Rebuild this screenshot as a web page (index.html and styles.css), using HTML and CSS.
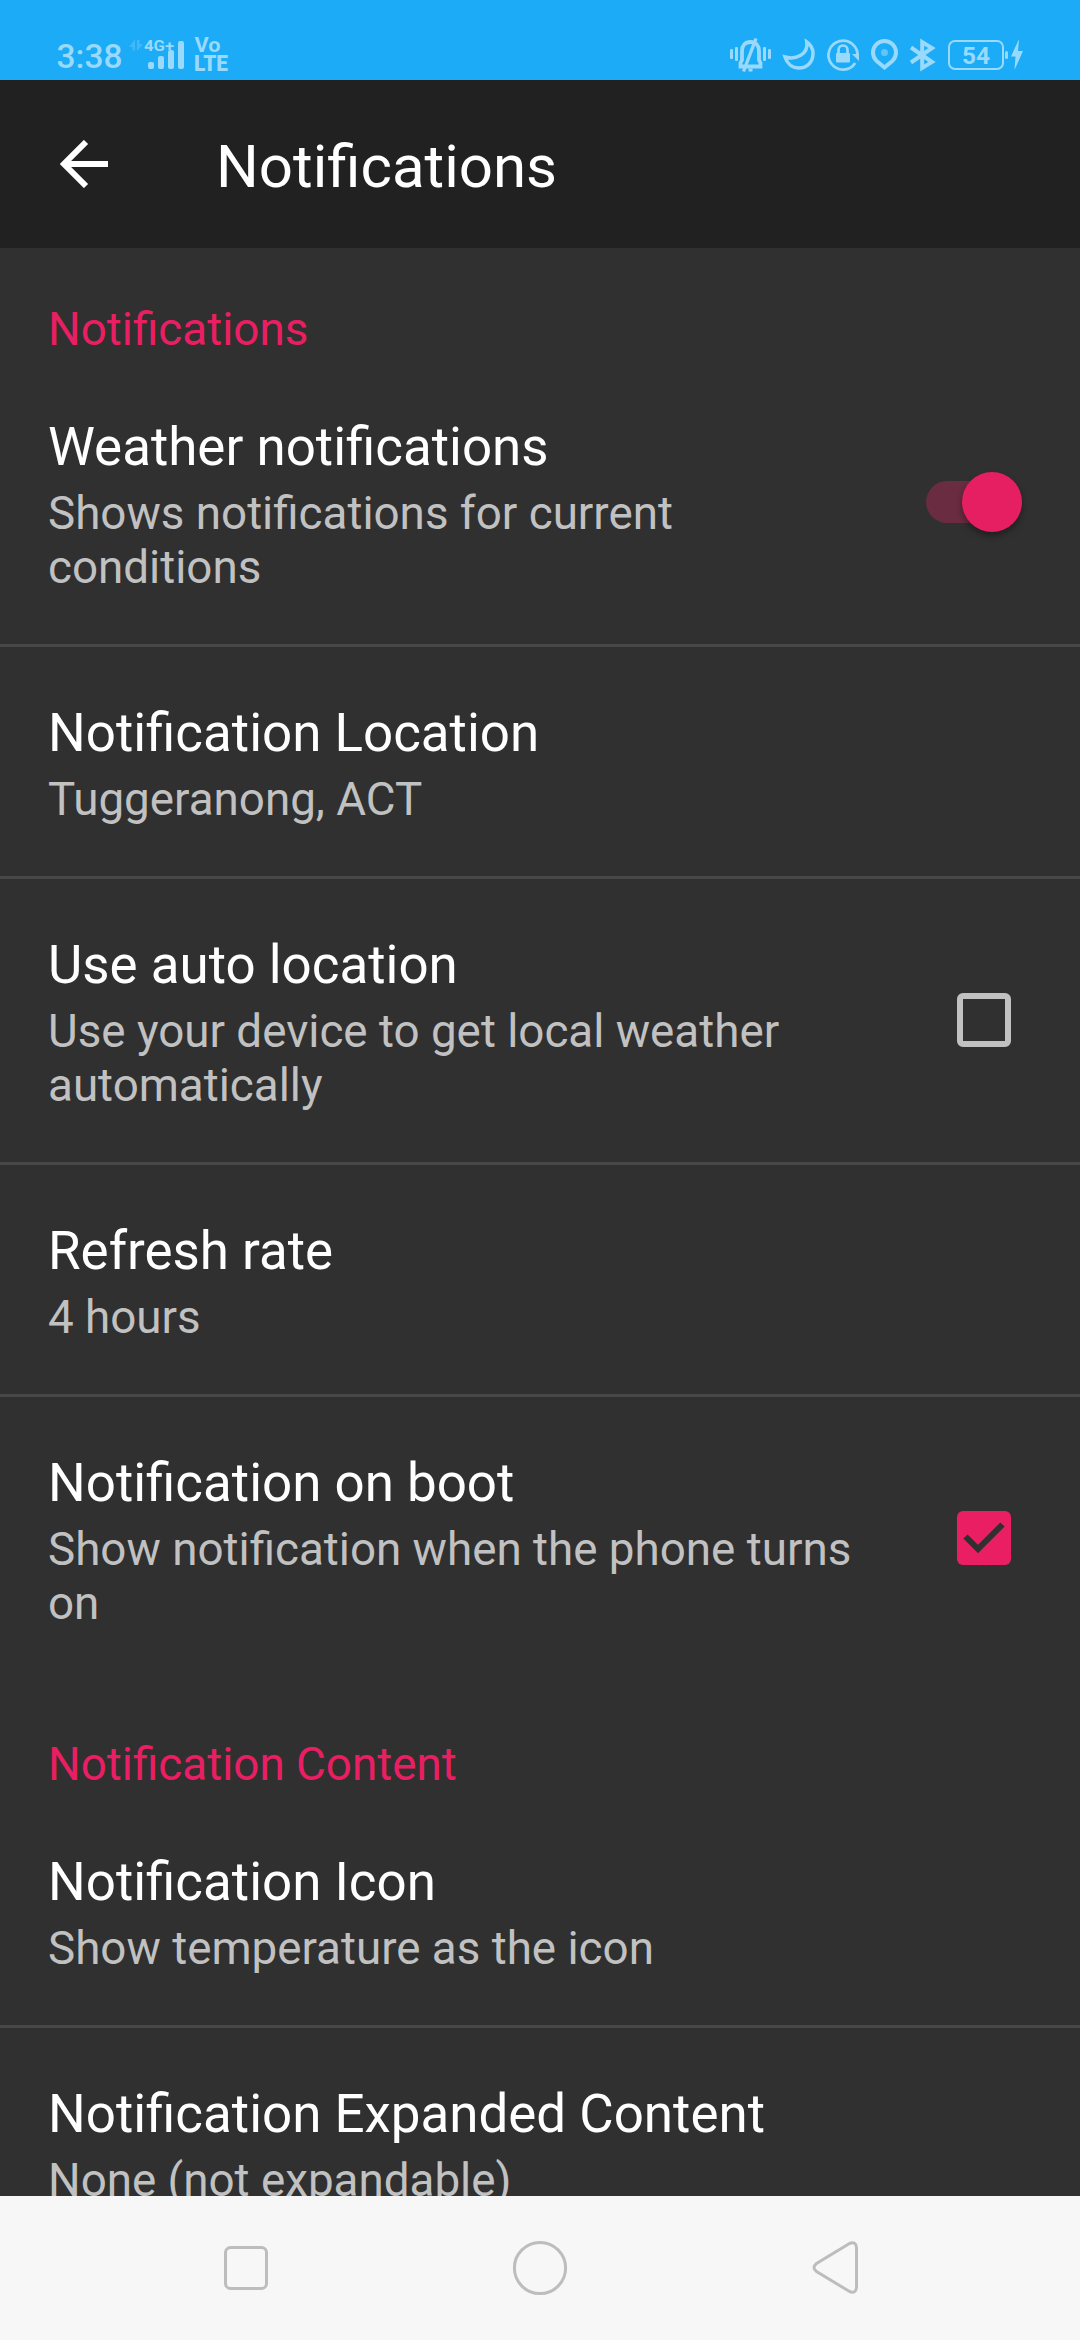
FILE: index.html
```html
<!DOCTYPE html>
<html lang="en">
<head>
<meta charset="utf-8">
<title>Notifications</title>
<link rel="stylesheet" href="styles.css">
</head>
<body>
<div class="screen">
  <header class="status">
    <svg class="status-art" width="1080" height="80" viewBox="0 0 1080 80">
      <g class="soft-text">
        <text x="56.500" y="68.300" font-size="33.700" textLength="66" lengthAdjust="spacingAndGlyphs">3:38</text>
        <text class="heavy" x="144" y="51" font-size="15.500" textLength="30" lengthAdjust="spacingAndGlyphs">4G+</text>
        <text class="heavy" x="194.500" y="52.300" font-size="19.500" textLength="26" lengthAdjust="spacingAndGlyphs">Vo</text>
        <text class="black" x="194" y="71" font-size="21.500" textLength="34" lengthAdjust="spacingAndGlyphs">LTE</text>
        <text class="heavy" x="962" y="64" font-size="23.500" textLength="28" lengthAdjust="spacingAndGlyphs">54</text>
      </g>
      <g fill="#99d9fb" fill-opacity=".3"><path d="M129 47l6-7.500v11h-2.500V47zM137 40v11l6-7h-3.500v-4z"/></g>
      <g fill="#99d9fb">
        <rect x="148" y="62" width="6" height="7" rx="2"/><rect x="158" y="56" width="6" height="13" rx="2"/>
        <rect x="168" y="50" width="6" height="19" rx="2"/><rect x="178" y="41" width="6" height="28" rx="2"/>
        <rect x="730" y="49" width="3" height="10" rx="1"/><rect x="735" y="47" width="3" height="14" rx="1"/>
        <rect x="763" y="47" width="3" height="14" rx="1"/><rect x="768" y="49" width="3" height="10" rx="1"/>
        <rect x="836" y="53" width="14" height="9.500" rx="1"/>
        <path d="M1019 39l-8 17.500h4.500l-1 13.500 8.500-19h-5z"/>
        <rect x="1005" y="51" width="3" height="8" rx="1.500"/>
      </g>
      <g fill="none" stroke="#99d9fb" stroke-width="3">
        <path stroke-width="3.800" d="M740.500 66.500V63l1.500-3V51c0-5.500 3-9 8.500-9s8.500 3.500 8.500 9v9l1.500 3v3.500z"/>
        <path stroke-width="3.400" d="M756 38.500l-12.500 33"/><path d="M748.500 70h4"/>
        <path stroke-width="3.500" d="M806.800 42c3.500 2.500 6.200 6.500 6.200 11.500 0 8.500-6 14.500-14 14.500-7 0-12-4.500-14-11 11 3 23.500-2.500 21.800-15z"/>
        <path stroke-width="2.700" d="M855.200 63A14.500 14.500 0 1 1 857.400 57"/>
        <path stroke-width="2.700" d="M838.500 54v-4a4.500 4.500 0 0 1 9 0v4"/>
        <path stroke-width="4" d="M884.500 67.500l-8.100-6.800a11.500 11.500 0 1 1 16.200 0z"/>
        <path stroke-width="4" d="M911 47.500l21 14.500-9.800 6V42l9.800 6-21 14.500"/>
        <rect x="949" y="41" width="54" height="28" rx="6" stroke-width="2"/>
      </g>
      <path d="M852 54h7v7z" fill="#99d9fb"/>
      <circle cx="884.500" cy="52.500" r="3.500" fill="#5fc5fa"/>
    </svg>
  </header>
  <div class="appbar">
    <svg width="48" height="48" viewBox="0 0 48 48" fill="none" stroke="#fff" stroke-width="6"><path d="M48 24H4M26 2L4 24l22 22"/></svg>
    <h1>Notifications</h1>
  </div>
  <main class="list">
    <h2 class="section">Notifications</h2>
    <div class="item">
      <div class="copy"><div class="name">Weather notifications</div><div class="desc">Shows notifications for current<br>conditions</div></div>
      <div class="switch"><span class="knob"></span></div>
    </div>
    <div class="item ruled">
      <div class="copy"><div class="name">Notification Location</div><div class="desc">Tuggeranong, ACT</div></div>
    </div>
    <div class="item ruled">
      <div class="copy"><div class="name">Use auto location</div><div class="desc">Use your device to get local weather<br>automatically</div></div>
      <span class="check"></span>
    </div>
    <div class="item ruled">
      <div class="copy"><div class="name">Refresh rate</div><div class="desc">4 hours</div></div>
    </div>
    <div class="item ruled">
      <div class="copy"><div class="name">Notification on boot</div><div class="desc">Show notification when the phone turns<br>on</div></div>
      <span class="check on"><svg width="54" height="54" viewBox="0 0 54 54" fill="none" stroke="#303030" stroke-width="6"><path d="M8.500 25.500L21 38l24.500-24.500"/></svg></span>
    </div>
    <h2 class="section next">Notification Content</h2>
    <div class="item">
      <div class="copy"><div class="name">Notification Icon</div><div class="desc">Show temperature as the icon</div></div>
    </div>
    <div class="item ruled">
      <div class="copy"><div class="name">Notification Expanded Content</div><div class="desc">None (not expandable)</div></div>
    </div>
  </main>
  <nav class="navbar">
    <svg width="60" height="60" viewBox="0 0 60 60"><rect x="9.500" y="9.500" width="41" height="41" rx="5"/></svg>
    <svg width="60" height="60" viewBox="0 0 60 60"><circle cx="30" cy="30" r="25.600"/></svg>
    <svg width="60" height="60" viewBox="0 0 60 60"><path d="M45.500 5.500L12.500 25.500q-5 4 0 8L45.500 53.500q6.500 2.500 7-4V9.500q-.5-6.500-7-4z"/></svg>
  </nav>
</div>
</body>
</html>
```
FILE: styles.css
```css
* { box-sizing: border-box; }
body { margin: 0; background: #303030; font-family: Roboto, "Noto Sans", sans-serif; }
.screen { width: 1080px; height: 2340px; display: flex; flex-direction: column; overflow: hidden; }
.status { height: 80px; background: #1cabf6; flex: none; }
.status-art { display: block; }
.soft-text { fill: #99d9fb; font-family: Roboto, sans-serif; font-weight: 500; }
.heavy { font-weight: 700; }
.black { font-weight: 900; }
.appbar { height: 168px; flex: none; background: #212121; display: flex; align-items: center; padding-left: 60px; gap: 108px; }
h1 { margin: 5px 0 0; color: #fff; font-size: 60px; font-weight: 400; line-height: 70px; }
.list { flex: 1; min-height: 0; overflow: hidden; }
.section { margin: 0; height: 113px; padding: 55px 48px 0; color: #e91e63; font-size: 45.8px; font-weight: 400; line-height: 54px; }
.section.next { margin-top: 3px; }
.item { display: flex; justify-content: space-between; align-items: center; padding: 0 48px; }
.item.ruled { border-top: 3px solid #484848; }
.copy { padding: 55px 0 49px; }
.name { color: #fff; font-size: 52.9px; line-height: 62px; white-space: nowrap; }
.desc { margin-top: 9px; color: #c1c1c1; font-size: 45.75px; line-height: 54px; white-space: nowrap; }
.switch { width: 96px; height: 42px; margin: 0 10px 1px 0; border-radius: 21px; background: #692c40; display: flex; align-items: center; justify-content: flex-end; }
.knob { width: 60px; height: 60px; flex: none; border-radius: 50%; background: #e61e62; box-shadow: 0 4px 6px rgba(0,0,0,.35); }
.check { width: 54px; height: 54px; margin: 0 21px 1px 0; border: 6px solid #c1c1c1; border-radius: 6px; }
.check.on { border: 0; background: #e91e63; }
.check svg { display: block; }
.navbar { height: 144px; flex: none; background: #f7f7f7; display: flex; justify-content: space-between; padding: 42px 216px; }
.navbar svg { fill: none; stroke: #bdbdbd; stroke-width: 3; }
```
